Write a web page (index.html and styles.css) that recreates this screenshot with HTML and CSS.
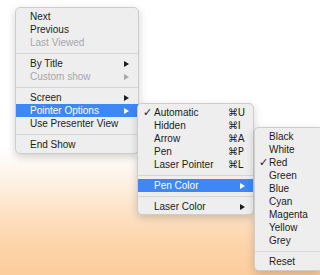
FILE: index.html
```html
<!DOCTYPE html>
<html lang="en">
<head>
  <meta charset="UTF-8">
  <title>Pointer Options</title>
  <link rel="stylesheet" href="styles.css">
</head>
<body>
  <div class="desktop">
    <!-- main context menu -->
    <div class="menu menu-main">
      <div class="item">Next</div>
      <div class="item">Previous</div>
      <div class="item disabled">Last Viewed</div>
      <div class="sep"></div>
      <div class="item sub"><span class="label">By Title</span><span class="arrow"></span></div>
      <div class="item sub disabled"><span class="label">Custom show</span><span class="arrow"></span></div>
      <div class="sep"></div>
      <div class="item sub"><span class="label">Screen</span><span class="arrow"></span></div>
      <div class="item sub active"><span class="label">Pointer Options</span><span class="arrow"></span></div>
      <div class="item">Use Presenter View</div>
      <div class="sep"></div>
      <div class="item">End Show</div>
    </div>

    <!-- pointer options submenu -->
    <div class="menu menu-pointer">
      <div class="item"><span class="check">✓</span><span class="label">Automatic</span><span class="key">⌘U</span></div>
      <div class="item"><span class="check"></span><span class="label">Hidden</span><span class="key">⌘I</span></div>
      <div class="item"><span class="check"></span><span class="label">Arrow</span><span class="key">⌘A</span></div>
      <div class="item"><span class="check"></span><span class="label">Pen</span><span class="key">⌘P</span></div>
      <div class="item"><span class="check"></span><span class="label">Laser Pointer</span><span class="key">⌘L</span></div>
      <div class="sep"></div>
      <div class="item sub active"><span class="check"></span><span class="label">Pen Color</span><span class="arrow"></span></div>
      <div class="sep"></div>
      <div class="item sub"><span class="check"></span><span class="label">Laser Color</span><span class="arrow"></span></div>
    </div>

    <!-- pen colour submenu -->
    <div class="menu menu-color">
      <div class="item"><span class="check"></span><span class="label">Black</span></div>
      <div class="item"><span class="check"></span><span class="label">White</span></div>
      <div class="item"><span class="check">✓</span><span class="label">Red</span></div>
      <div class="item"><span class="check"></span><span class="label">Green</span></div>
      <div class="item"><span class="check"></span><span class="label">Blue</span></div>
      <div class="item"><span class="check"></span><span class="label">Cyan</span></div>
      <div class="item"><span class="check"></span><span class="label">Magenta</span></div>
      <div class="item"><span class="check"></span><span class="label">Yellow</span></div>
      <div class="item"><span class="check"></span><span class="label">Grey</span></div>
      <div class="sep"></div>
      <div class="item"><span class="check"></span><span class="label">Reset</span></div>
    </div>
  </div>
</body>
</html>
```

FILE: styles.css
```css
html, body {
  margin: 0;
  padding: 0;
}
body {
  width: 320px;
  height: 275px;
  overflow: hidden;
  font-family: "Liberation Sans", "DejaVu Sans", sans-serif;
  font-size: 10px;
  color: #1c1c1c;
}
.desktop {
  position: relative;
  width: 320px;
  height: 275px;
  overflow: hidden;
  background: linear-gradient(to bottom, #ffffff 0, #ffffff 148px, #fef3e7 178px, #fde2c6 212px, #fdd5ac 242px, #fccd9d 275px);
}
.menu {
  position: absolute;
  box-sizing: border-box;
  background: #eeeeee;
  border: 1px solid #cdcdcd;
  border-radius: 5px;
  padding: 2px 0 2px;
  box-shadow: 0 3px 9px rgba(0, 0, 0, 0.18);
}
.menu-main {
  left: 15px;
  top: 7px;
  width: 124px;
}
.menu-pointer {
  left: 137px;
  top: 103px;
  width: 117px;
  padding-bottom: 1px;
}
.menu-color {
  left: 254px;
  top: 127px;
  width: 66px;
  border-right: none;
  border-radius: 5px 0 0 5px;
}
.item {
  display: flex;
  align-items: center;
  height: 13px;
  padding: 0 9px 0 14px;
  white-space: nowrap;
}
.menu-pointer .item {
  padding-left: 5px;
  padding-right: 8px;
}
.menu-color .item {
  padding-left: 4px;
  padding-right: 0;
}
.check {
  width: 11px;
  flex: none;
  font-family: "DejaVu Sans", sans-serif;
  font-size: 11px;
}
.menu-color .check {
  width: 10px;
}
.label {
  flex: 1;
}
.key {
  width: 17px;
  font-family: "DejaVu Sans", sans-serif;
  font-size: 10px;
  letter-spacing: -0.3px;
}
.arrow {
  width: 0;
  height: 0;
  border-top: 3px solid transparent;
  border-bottom: 3px solid transparent;
  border-left: 5px solid #1c1c1c;
}
.disabled {
  color: #a7a7a7;
}
.disabled .arrow {
  border-left-color: #a7a7a7;
}
.active {
  background: #3f87f5;
  color: #ffffff;
}
.active .arrow {
  border-left-color: #ffffff;
}
.sep {
  height: 1px;
  background: #d5d5d5;
  margin: 4px 0 3px;
}
```
